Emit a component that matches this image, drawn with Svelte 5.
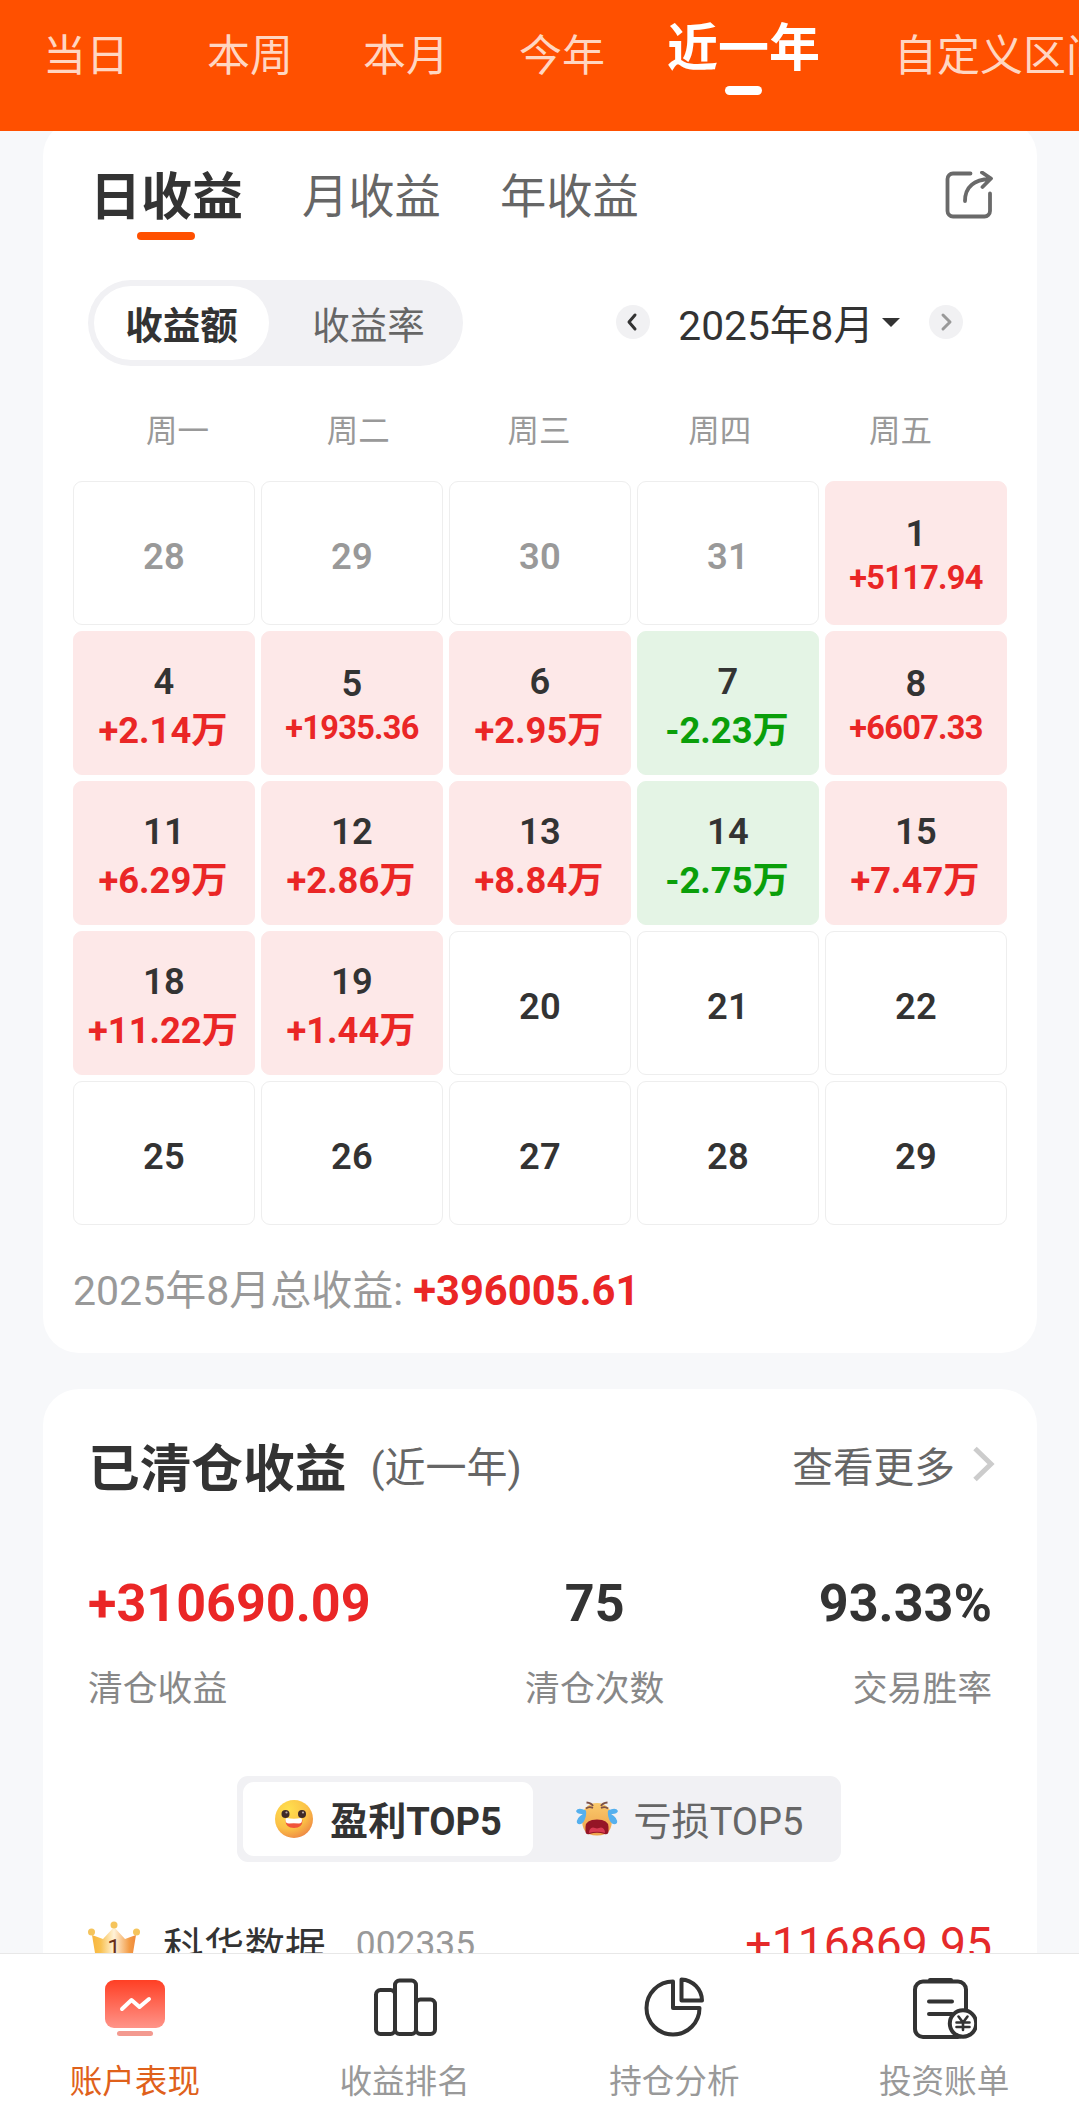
<script>
  const ranges = ['当日', '本周', '本月', '今年', '近一年', '自定义区间'];
  let range = $state('近一年');

  const periods = ['日收益', '月收益', '年收益'];
  let period = $state('日收益');

  let mode = $state('收益额');
  let top = $state('盈利');

  const weekdays = ['周一', '周二', '周三', '周四', '周五'];

  const days = [
    { d: 28, other: true }, { d: 29, other: true }, { d: 30, other: true }, { d: 31, other: true }, { d: 1, v: '+5117.94' },
    { d: 4, v: '+2.14万' }, { d: 5, v: '+1935.36' }, { d: 6, v: '+2.95万' }, { d: 7, v: '-2.23万' }, { d: 8, v: '+6607.33' },
    { d: 11, v: '+6.29万' }, { d: 12, v: '+2.86万' }, { d: 13, v: '+8.84万' }, { d: 14, v: '-2.75万' }, { d: 15, v: '+7.47万' },
    { d: 18, v: '+11.22万' }, { d: 19, v: '+1.44万' }, { d: 20 }, { d: 21 }, { d: 22 },
    { d: 25 }, { d: 26 }, { d: 27 }, { d: 28 }, { d: 29 }
  ];

  const stats = [
    { label: '清仓收益', value: '+310690.09', up: true },
    { label: '清仓次数', value: '75' },
    { label: '交易胜率', value: '93.33%' }
  ];
</script>

<div class="page">
  <header>
    {#each ranges as r}
      <button class="range" class:active={range === r} onclick={() => (range = r)}>{r}</button>
    {/each}
  </header>

  <main>
    <section class="card calendar">
      <div class="periods">
        {#each periods as p}
          <button class="period" class:active={period === p} onclick={() => (period = p)}>{p}</button>
        {/each}
        <svg class="share" viewBox="0 0 48 48" width="48" height="48">
          <path d="M25.500 2.500H8a5.500 5.500 0 0 0-5.500 5.500V40a5.500 5.500 0 0 0 5.500 5.500H39.500a5.500 5.500 0 0 0 5.500-5.500V22.500" />
          <path d="M20 30C20 16 29 8.500 45 8M37 1.500l9 6-8.500 8.500" />
        </svg>
      </div>

      <div class="controls">
        <div class="switch">
          <button class:on={mode === '收益额'} onclick={() => (mode = '收益额')}>收益额</button>
          <button class:on={mode === '收益率'} onclick={() => (mode = '收益率')}>收益率</button>
        </div>
        <div class="month">
          <button class="step" aria-label="prev">
            <svg viewBox="0 0 34 34" width="34" height="34"><path d="M19 10l-6 7 6 7" /></svg>
          </button>
          <span class="date">2025年8月</span>
          <i class="caret"></i>
          <button class="step next" aria-label="next">
            <svg viewBox="0 0 34 34" width="34" height="34"><path d="M14 10l7 7-7 7" /></svg>
          </button>
        </div>
      </div>

      <div class="weekdays">
        {#each weekdays as w}<span>{w}</span>{/each}
      </div>

      <div class="grid">
        {#each days as day}
          <div class="day" class:other={day.other} class:up={day.v?.startsWith('+')} class:down={day.v?.startsWith('-')} class:small={day.v && !day.v.endsWith('万')}>
            <b>{day.d}</b>
            {#if day.v}<span>{day.v}</span>{/if}
          </div>
        {/each}
      </div>

      <p class="total">2025年8月总收益: <b>+396005.61</b></p>
    </section>

    <section class="card closed">
      <div class="title">
        <h2>已清仓收益</h2>
        <span class="sub">(近一年)</span>
        <span class="more">查看更多</span>
        <svg class="chevron" viewBox="0 0 22 36" width="22" height="36"><path d="M2 2.500l16 15.500L2 33.500" /></svg>
      </div>

      <div class="stats">
        {#each stats as s}
          <div class="stat">
            <b class:up={s.up}>{s.value}</b>
            <span>{s.label}</span>
          </div>
        {/each}
      </div>

      <div class="tops">
        <button class:on={top === '盈利'} onclick={() => (top = '盈利')}>
          <svg viewBox="0 0 40 40" width="40" height="40">
            <defs>
              <radialGradient id="smile" cx=".35" cy=".25" r=".85">
                <stop offset="0" stop-color="#ffe04e" />
                <stop offset=".6" stop-color="#fbc046" />
                <stop offset="1" stop-color="#ec7f45" />
              </radialGradient>
            </defs>
            <circle cx="20" cy="20" r="19" fill="url(#smile)" />
            <circle cx="11.500" cy="15" r="4" fill="#3f2a28" />
            <circle cx="28" cy="15" r="4" fill="#3f2a28" />
            <circle cx="12.500" cy="13.500" r="1.100" fill="#b9a8a4" />
            <circle cx="29" cy="13.500" r="1.100" fill="#b9a8a4" />
            <path d="M11.500 21h17q0 8-8.500 8t-8.500-8z" fill="#f0533a" />
            <path d="M13 19q7 1.500 13.500 0 1.500 0 1.500 2 0 3.500-3 3.500-5.500-.5-10 0-3.500 0-3.500-3.500 0-2 1.500-2z" fill="#fff" />
          </svg>
          盈利TOP5
        </button>
        <button class:on={top === '亏损'} onclick={() => (top = '亏损')}>
          <svg viewBox="0 0 44 36" width="44" height="36">
            <defs>
              <linearGradient id="cry" x2="0" y2="1">
                <stop offset="0" stop-color="#fac96c" />
                <stop offset="1" stop-color="#eea24a" />
              </linearGradient>
            </defs>
            <path d="M22 2c9 0 15 6 15 16s-3 16.500-15 16.500S7 28 7 18 13 2 22 2z" fill="url(#cry)" />
            <path d="M10.500 30V26q0-7.500 11.500-7.500T33.500 26v4q0 4-4 3-7.500-2.500-15 0-4 1-4-3z" fill="#951526" />
            <path d="M14 32q0-5 4-5.500l4 1 4-1q4 .5 4 5.500-8-2.500-16 0z" fill="#d83a52" />
            <path d="M11.500 1.500q5 .5 6.500 3.500M11 7.500q3-2.500 7-.5M32.500 1.500q-5 .5-6.500 3.500M33 7.500q-3-2.500-7-.5" fill="none" stroke="#7d5148" stroke-width="1.800" />
            <path d="M11 9.500Q3 6 1 10q1 3.500 7 3-7 4-6 9 3 3 6.500-1 3.500-6 2.500-11.500zM33 9.500q8-3.500 10 .5-1 3.500-7 3 7 4 6 9-3 3-6.500-1-3.500-6-2.500-11.500z" fill="#55b0ee" />
          </svg>
          亏损TOP5
        </button>
      </div>

      <div class="stock">
        <svg class="crown" viewBox="0 0 52 46" width="52" height="46">
          <defs>
            <linearGradient id="crown">
              <stop offset="0" stop-color="#f8b53c" />
              <stop offset=".2" stop-color="#f9c252" />
              <stop offset=".5" stop-color="#fff3da" />
              <stop offset=".85" stop-color="#f39b45" />
              <stop offset="1" stop-color="#f0893c" />
            </linearGradient>
          </defs>
          <path d="M4 14l11 4L26 6l11 12 11-4-5 30H9z" fill="url(#crown)" />
          <circle cx="3.500" cy="11" r="3.500" fill="#f5c45c" />
          <circle cx="26" cy="4" r="3.500" fill="#f5c45c" />
          <circle cx="48.500" cy="11" r="3.500" fill="#f5c45c" />
          <text x="26" y="35" text-anchor="middle">1</text>
        </svg>
        <span class="name">科华数据</span>
        <span class="code">002335</span>
        <span class="gain">+116869.95</span>
      </div>
    </section>
  </main>

  <nav>
    <button class="active">
      <svg viewBox="0 0 66 66" width="66" height="66">
        <defs>
          <linearGradient id="tab" x2="0" y2="1">
            <stop offset="0" stop-color="#ff3f24" />
            <stop offset="1" stop-color="#ff9489" />
          </linearGradient>
        </defs>
        <rect x="3" y="5" width="60" height="48" rx="9" />
        <rect x="15" y="56" width="36" height="5" rx="2.500" />
        <path d="M20 34l9.500-9 8 7L47 24" />
      </svg>
      账户表现
    </button>
    <button>
      <svg viewBox="0 0 66 66" width="66" height="66">
        <rect x="4" y="15" width="19" height="44" rx="4.500" />
        <rect x="23" y="5.500" width="21" height="53.500" rx="4.500" />
        <rect x="44" y="24.500" width="19" height="34.500" rx="4.500" />
      </svg>
      收益排名
    </button>
    <button>
      <svg viewBox="0 0 66 66" width="66" height="66">
        <path d="M32 6.500A26.500 26.500 0 1 0 58.500 33H32z" />
        <path d="M40.500 4.500A21.500 21.500 0 0 1 61 25.500H40.500z" />
      </svg>
      持仓分析
    </button>
    <button>
      <svg viewBox="0 0 66 66" width="66" height="66">
        <rect x="4" y="6.500" width="51" height="55.500" rx="8" />
        <path d="M19 5h21M18 26.500h23M18 39h23" />
        <circle cx="52" cy="48.500" r="13.200" />
        <path class="thin" d="M47.500 41.500l4.500 6 4.500-6M52 47.500V55M45.500 47.500h13M45.500 52h13" />
      </svg>
      投资账单
    </button>
  </nav>
</div>

<style>
  :global(body) {
    background: #f7f8fa;
  }

  .page {
    position: relative;
    width: 1079px;
    height: 2118px;
    overflow: hidden;
    display: flex;
    flex-direction: column;
    font-family: Roboto, "Noto Sans CJK SC", sans-serif;
    color: #333;
  }

  button {
    border: 0;
    padding: 0;
    background: none;
    font: inherit;
    color: inherit;
    white-space: nowrap;
  }

  header {
    flex: none;
    height: 131px;
    box-sizing: border-box;
    padding-left: 43px;
    background: #ff5000;
    display: flex;
    align-items: flex-start;
    gap: 70px;
    z-index: 1;
  }

  .range {
    flex: none;
    height: 104px;
    font-size: 43px;
    color: #ffd6c2;
  }

  .range:first-child {
    margin-right: 8px;
  }

  .range.active {
    position: relative;
    height: 88px;
    margin: 0 4px 0 -8px;
    font-size: 51px;
    font-weight: 700;
    color: #fff;
  }

  .range.active::after {
    content: "";
    position: absolute;
    left: 50%;
    top: 86px;
    width: 37px;
    height: 9px;
    margin-left: -19px;
    border-radius: 5px;
    background: #fff;
  }

  main {
    flex: 1;
    min-height: 0;
    margin-top: -11px;
    padding: 0 42px 0 43px;
  }

  .card {
    box-sizing: border-box;
    background: #fff;
    border-radius: 36px;
  }

  .calendar {
    height: 1233px;
    padding: 0 30px;
    margin-bottom: 36px;
  }

  .periods {
    display: flex;
    align-items: center;
    height: 146px;
    padding: 0 14px 0 17px;
    gap: 59px;
  }

  .period {
    padding-bottom: 2px;
    font-size: 46.300px;
    color: #666;
  }

  .period.active {
    position: relative;
    padding-bottom: 0;
    font-size: 51px;
    font-weight: 700;
    color: #333;
  }

  .period.active::after {
    content: "";
    position: absolute;
    left: 47px;
    bottom: -10px;
    width: 58px;
    height: 8px;
    border-radius: 4px;
    background: #ff5000;
  }

  .share {
    margin-left: auto;
    margin-top: 3px;
  }

  .share path {
    fill: none;
    stroke: #6a6a6a;
    stroke-width: 3.800;
    stroke-linecap: round;
    stroke-linejoin: round;
  }

  .controls {
    display: flex;
    justify-content: space-between;
    align-items: center;
    margin-top: 14px;
    padding: 0 44px 0 15px;
  }

  .switch {
    display: flex;
    box-sizing: border-box;
    width: 375px;
    height: 86px;
    padding: 6px;
    border-radius: 43px;
    background: #f1f1f4;
  }

  .switch button {
    width: 175px;
    flex: none;
    padding-bottom: 2px;
    border-radius: 37px;
    font-size: 37.500px;
    color: #666;
  }

  .switch button + button {
    width: 199px;
  }

  .switch .on {
    background: #fff;
    font-weight: 700;
    color: #333;
  }

  .month {
    display: flex;
    align-items: center;
    margin-bottom: 2px;
  }

  .step {
    width: 34px;
    height: 34px;
    border-radius: 50%;
    background: #f1f1f3;
  }

  .step svg {
    display: block;
  }

  .step path {
    fill: none;
    stroke: #333;
    stroke-width: 3;
    stroke-linecap: round;
    stroke-linejoin: round;
  }

  .step.next path {
    stroke: #999;
  }

  .date {
    margin-left: 28px;
    font-size: 40.700px;
  }

  .caret {
    margin: 0 29px 0 8px;
    border: 9px solid transparent;
    border-top-color: #333;
    border-bottom: 0;
  }

  .weekdays {
    display: flex;
    padding: 0 16px 0 14px;
    margin-top: 42px;
    height: 48px;
    line-height: 48px;
    font-size: 31.500px;
    color: #999;
  }

  .weekdays span {
    flex: 1;
    text-align: center;
  }

  .grid {
    display: grid;
    grid-template-columns: repeat(5, 182px);
    grid-auto-rows: 144px;
    gap: 6px;
    margin-top: 25px;
  }

  .day {
    box-sizing: border-box;
    border: 1px solid #eee;
    border-radius: 9px;
    display: flex;
    flex-direction: column;
    align-items: center;
    justify-content: center;
    font-size: 36.300px;
    font-weight: 700;
    line-height: 49px;
  }

  .day b {
    font-weight: 600;
    letter-spacing: .3px;
    padding-top: 6px;
  }

  .day span {
    margin-right: 2px;
    white-space: nowrap;
  }

  .day.other {
    color: #999;
  }

  .day.up {
    background: #fde8e8;
    border-color: #fde8e8;
  }

  .day.down {
    background: #e4f4e5;
    border-color: #e4f4e5;
  }

  .day.up span, .up {
    color: #ea2626;
  }

  .day.up b {
    color: #333;
  }

  .day.down span {
    color: #0a9f0a;
  }

  .day.small {
    line-height: 45px;
  }

  .day.small span {
    margin-right: 0;
    font-size: 32.500px;
    letter-spacing: -.7px;
  }

  .total {
    margin: 36px 0 0;
    line-height: 60px;
    font-size: 41px;
    color: #999;
  }

  .total b {
    font-size: 41.700px;
    color: #ea2626;
  }

  .closed {
    height: 800px;
    margin-top: 0;
    padding: 0 45px;
  }

  .title {
    display: flex;
    align-items: center;
    padding-top: 37px;
    height: 76px;
    font-size: 41px;
    color: #666;
  }

  h2 {
    margin: 0 24px 0 0;
    font-size: 51.700px;
    color: #333;
  }

  .more {
    margin-left: auto;
    margin-right: 18px;
    font-size: 40.700px;
  }

  .chevron {
    margin-right: -3px;
  }

  .chevron path {
    fill: none;
    stroke: #ccc;
    stroke-width: 5;
  }

  .stats {
    display: flex;
    justify-content: space-between;
    margin-top: 64px;
  }

  .stat {
    display: flex;
    flex-direction: column;
    align-items: center;
  }

  .stat:first-child {
    align-items: flex-start;
  }

  .stat:last-child {
    align-items: flex-end;
  }

  .stat b {
    font-size: 52.100px;
    line-height: 76px;
  }

  .stat span {
    margin-top: 22px;
    font-size: 34.800px;
    line-height: 50px;
    color: #888;
  }

  .tops {
    display: flex;
    box-sizing: border-box;
    width: 604px;
    height: 86px;
    margin: 62px auto 0 149px;
    padding: 6px;
    border-radius: 11px;
    background: #f1f1f4;
  }

  .tops button {
    flex: none;
    display: flex;
    align-items: center;
    justify-content: center;
    width: 290px;
    gap: 16px;
    padding-bottom: 2px;
    border-radius: 11px;
    font-size: 38.100px;
    color: #666;
  }

  .tops svg {
    position: relative;
    top: 1px;
  }

  .tops button + button {
    width: 312px;
    gap: 15px;
  }

  .tops .on {
    background: #fff;
    font-weight: 700;
    color: #333;
  }

  .stock {
    display: flex;
    align-items: center;
    height: 60px;
    margin-top: 52px;
  }

  .crown text {
    font-size: 24px;
    fill: #6a3018;
  }

  .name {
    margin-left: 23px;
    font-size: 40.700px;
  }

  .code {
    margin-left: 30px;
    font-size: 35.400px;
    color: #999;
  }

  .gain {
    margin-left: auto;
    font-size: 46.300px;
    color: #e52a2a;
  }

  nav {
    position: absolute;
    left: 0;
    right: 0;
    bottom: 0;
    height: 165px;
    box-sizing: border-box;
    border-top: 1px solid #e8e8e8;
    background: #fff;
    display: flex;
  }

  nav button {
    flex: 1;
    display: flex;
    flex-direction: column;
    align-items: center;
    padding-top: 21px;
    font-size: 32.600px;
    line-height: 48px;
    color: #999;
  }

  nav svg {
    margin-bottom: 17px;
  }

  nav svg * {
    fill: none;
    stroke: #333;
    stroke-width: 4;
    stroke-linecap: round;
    stroke-linejoin: round;
  }

  nav svg circle {
    fill: #fff;
  }

  nav svg .thin {
    stroke-width: 2.600;
  }

  nav .active {
    color: #df611b;
  }

  nav .active rect {
    stroke: none;
  }

  nav .active rect:first-of-type {
    fill: url(#tab);
  }

  nav .active rect + rect {
    fill: #f39a90;
  }

  nav .active path {
    stroke: #fff;
  }
</style>
